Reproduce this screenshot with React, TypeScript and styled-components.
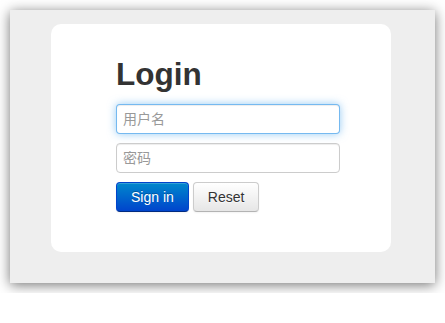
import React from 'react';
import styled, { createGlobalStyle } from 'styled-components';

const GlobalStyle = createGlobalStyle`
  html, body {
    margin: 0;
    padding: 0;
    background: #fff;
  }

  body {
    font-family: "Liberation Sans", Arial, "Noto Sans CJK SC", sans-serif;
    font-size: 14px;
    line-height: 20px;
    color: #333;
  }
`;

const Backdrop = styled.div`
  box-sizing: border-box;
  width: 425px;
  margin: 10px;
  padding: 14px 44px 31px 41px;
  background: #eee;
  box-shadow: 0 2px 12px rgba(0, 0, 0, 0.55);
`;

const Card = styled.form`
  box-sizing: border-box;
  width: 340px;
  padding: 20px 51px 40px 65px;
  background: #fff;
  border-radius: 10px;
`;

const Heading = styled.h2`
  margin: 10px 0;
  font-size: 31.5px;
  line-height: 40px;
  font-weight: bold;
  color: #333;
`;

const Field = styled.input<{ $focused?: boolean }>`
  display: block;
  box-sizing: border-box;
  width: 224px;
  height: 30px;
  margin: 0 0 9px;
  padding: 4px 6px;
  font-family: "Liberation Sans", Arial, "Noto Sans CJK SC", sans-serif;
  font-size: 14px;
  line-height: 20px;
  color: #555;
  background: #fff;
  border: 1px solid ${({ $focused }) => ($focused ? 'rgba(82, 168, 236, 0.8)' : '#ccc')};
  border-radius: 4px;
  outline: none;
  box-shadow: ${({ $focused }) => ($focused
    ? 'inset 0 1px 1px rgba(0, 0, 0, 0.075), 0 0 8px rgba(82, 168, 236, 0.6)'
    : 'inset 0 1px 1px rgba(0, 0, 0, 0.075)')};

  &::placeholder {
    color: #999;
  }
`;

const Actions = styled.div`
  display: flex;
  gap: 4px;
`;

const Button = styled.button<{ $primary?: boolean }>`
  box-sizing: border-box;
  height: 30px;
  padding: 4px 14px;
  font-family: "Liberation Sans", Arial, sans-serif;
  font-size: 14px;
  line-height: 20px;
  border-radius: 4px;
  cursor: pointer;
  color: ${({ $primary }) => ($primary ? '#fff' : '#333')};
  text-shadow: ${({ $primary }) => ($primary ? '0 -1px 0 rgba(0, 0, 0, 0.25)' : '0 1px 1px rgba(255, 255, 255, 0.75)')};
  background: ${({ $primary }) => ($primary
    ? 'linear-gradient(to bottom, #0088cc, #0044cc)'
    : 'linear-gradient(to bottom, #ffffff, #e6e6e6)')};
  border: 1px solid ${({ $primary }) => ($primary ? '#0044cc' : '#ccc')};
  border-bottom-color: ${({ $primary }) => ($primary ? '#002a80' : '#b3b3b3')};
  box-shadow: inset 0 1px 0 rgba(255, 255, 255, 0.2), 0 1px 2px rgba(0, 0, 0, 0.05);
`;

export default function App (): React.ReactElement {
  return (
    <>
      <GlobalStyle />
      <Backdrop>
        <Card onSubmit={(e) => e.preventDefault()}>
          <Heading>Login</Heading>
          <Field $focused placeholder='用户名' type='text' />
          <Field placeholder='密码' type='password' />
          <Actions>
            <Button $primary type='submit'>Sign in</Button>
            <Button type='reset'>Reset</Button>
          </Actions>
        </Card>
      </Backdrop>
    </>
  );
}
